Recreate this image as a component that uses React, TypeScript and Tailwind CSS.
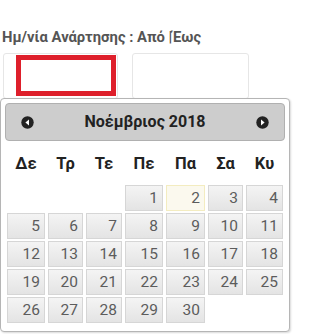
import React from 'react';

const dayNames = ['Δε', 'Τρ', 'Τε', 'Πε', 'Πα', 'Σα', 'Κυ'];

// November 2018 starts on Thursday (index 3)
const cells: (number | null)[] = [null, null, null, ...Array.from({ length: 30 }, (_, i) => i + 1)];

const NavIcon = ({ dir }: { dir: 'prev' | 'next' }) => (
    <svg width="13" height="13" viewBox="0 0 13 13">
        <circle cx="6.5" cy="6.5" r="6.2" fill="#222" />
        {dir === 'prev'
            ? <path d="M8 3.6 L4.4 6.5 L8 9.4 Z" fill="#fff" />
            : <path d="M5 3.6 L8.6 6.5 L5 9.4 Z" fill="#fff" />}
    </svg>
);

const DayCell = ({ day }: { day: number }) => {
    const today = day === 2;
    return (
        <div
            className={`h-[26px] border text-right pr-[4px] text-[15.5px] leading-[25px] text-[#5c5c5c] ${
                today
                    ? 'bg-[#fbf9ee] border-[#f3ecc0]'
                    : 'bg-gradient-to-b from-[#f4f4f4] to-[#e4e4e4] border-[#d6d6d6]'
            }`}
        >
            {day}
        </div>
    );
};

export default function App() {
    return (
        <div className="relative w-[295px] h-[334px] bg-white overflow-hidden font-['Roboto',sans-serif]">
            <div className="pt-[28px] pl-[2px] text-[14.8px] font-bold text-[#555] leading-[19px]">
                Ημ/νία Ανάρτησης : Από |Έως
            </div>
            <div className="flex gap-[14px] pl-[3px] mt-[6px]">
                <div className="relative w-[115px] h-[46px] border border-[#e6e6e6] rounded-[3px]">
                    <div className="absolute left-[12px] top-[1px] w-[100px] h-[41px] border-[5px] border-[#de1f2b]" />
                </div>
                <div className="w-[117px] h-[46px] border border-[#e6e6e6] rounded-[3px]" />
            </div>

            <div className="absolute left-0 top-[98px] w-[290px] h-[234px] bg-white border border-[#b5b5b5] rounded-[4px] shadow-[1px_1px_2px_rgba(0,0,0,0.15)] px-[4px] pt-[4px]">
                <div className="h-[38px] bg-[#cdcdcd] border border-[#b0b0b0] rounded-[4px] flex items-center justify-between px-[15px]">
                    <NavIcon dir="prev" />
                    <span className="text-[16px] font-bold text-[#222]">Νοέμβριος 2018</span>
                    <NavIcon dir="next" />
                </div>
                <div className="grid grid-cols-[38px_35px_36px_38px_39px_35px_37px] gap-x-[3px] gap-y-[2px] pl-[2px] mt-[8px]">
                    {dayNames.map((d) => (
                        <div key={d} className="h-[34px] text-center text-[16.5px] font-bold text-[#222] leading-[30px]">
                            {d}
                        </div>
                    ))}
                    {cells.map((d, i) => (d === null ? <div key={`e${i}`} /> : <DayCell key={d} day={d} />))}
                </div>
            </div>
        </div>
    );
}
